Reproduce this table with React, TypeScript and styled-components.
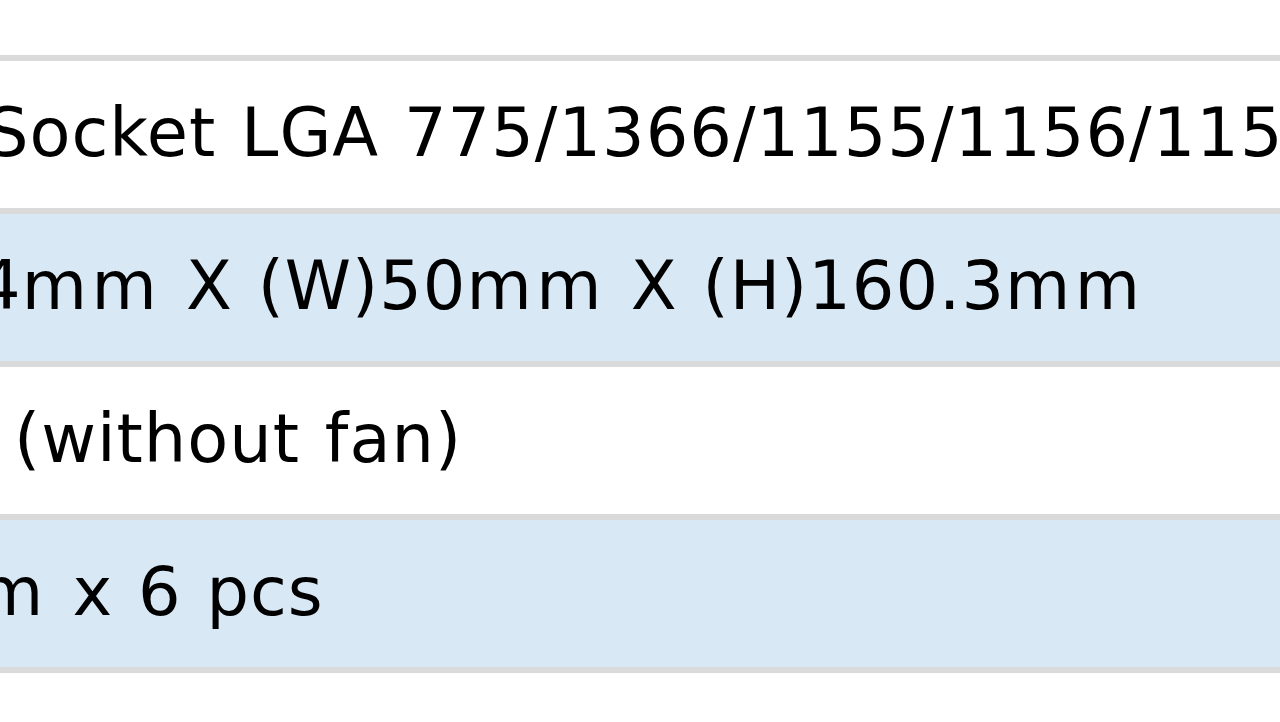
import React from "react";
import styled, { createGlobalStyle } from "styled-components";

const Global = createGlobalStyle`
  html, body { margin: 0; padding: 0; background: #ffffff; }
  body { width: 1280px; height: 722px; overflow: hidden; }
  #root { width: 1280px; height: 722px; overflow: hidden; }
`;

const Table = styled.div`
  display: flex;
  flex-direction: column;
  width: 1280px;
  height: 722px;
  overflow: hidden;
  font-family: "DejaVu Sans", Verdana, sans-serif;
  font-size: 67px;
  letter-spacing: 1px;
  word-spacing: 2.5px;
  color: #000000;
`;

const TopSpace = styled.div`
  height: 55px;
  background: #ffffff;
  flex: none;
`;

const Row = styled.div<{ $alt?: boolean }>`
  flex: none;
  height: 147px;
  border-top: 6px solid #dadada;
  background: ${(p) => (p.$alt ? "#d9e8f5" : "#ffffff")};
  display: flex;
  align-items: flex-start;
  overflow: hidden;
`;

const Cell = styled.div<{ $offset: number }>`
  white-space: nowrap;
  line-height: 1;
  padding-top: 39px;
  margin-left: ${(p) => p.$offset}px;
`;

const WideM = styled.span`
  letter-spacing: 4.5px;
`;

const EndRow = styled.div`
  flex: 1;
  border-top: 6px solid #dadada;
  background: #ffffff;
`;

const rows = [
  { text: "Socket LGA 775/1366/1155/1156/1150", offset: -14, alt: false },
  { text: "4mm X (W)50mm X (H)160.3mm", offset: -22, alt: true },
  { text: "(without fan)", offset: 14, alt: false },
  { text: "m x 6 pcs", offset: -22, alt: true },
];

function renderText(t: string) {
  return t.split(/(m)/).map((part, i) =>
    part === "m" ? <WideM key={i}>m</WideM> : <React.Fragment key={i}>{part}</React.Fragment>
  );
}

export default function App() {
  return (
    <>
      <Global />
      <Table>
        <TopSpace />
        {rows.map((r, i) => (
          <Row key={i} $alt={r.alt}>
            <Cell $offset={r.offset}>{renderText(r.text)}</Cell>
          </Row>
        ))}
        <EndRow />
      </Table>
    </>
  );
}
